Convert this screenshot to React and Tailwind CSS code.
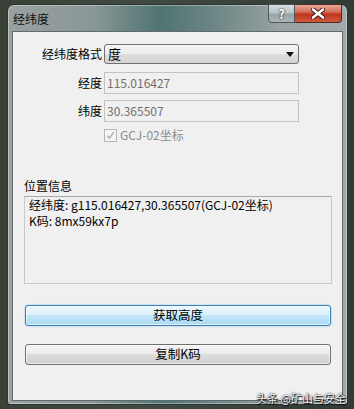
import React from "react";

const font = { fontFamily: '"Noto Sans CJK SC", "Noto Sans", sans-serif' };

const Field = ({ label, children, className = "" }) => (
  <div className={"flex items-center " + className}>
    <div className="w-[91px] pr-[2px] text-right text-[12px] text-black leading-[16px]">
      {label}
    </div>
    {children}
  </div>
);

const DisabledInput = ({ value }) => (
  <div className="flex h-[22px] w-[195px] items-center border border-[#c3c3c3] bg-[#f0f0f0] pl-[2px] text-[12px] text-[#707070]">
    {value}
  </div>
);

const App = () => {
  return (
    <div
      className="relative h-[409px] w-[354px] overflow-hidden bg-[linear-gradient(90deg,#3a4136_0%,#414a40_40%,#323a35_100%)] pl-[7px] pt-[4px]"
      style={font}>
      <div className="flex h-[401px] w-[341px] flex-col rounded-t-[7px] rounded-b-[3px] border border-[#2b3436] bg-[linear-gradient(90deg,#9aa2a0_0%,#8a9796_25%,#4f7472_45%,#6b8584_60%,#98a2a2_80%,#a3aaab_100%)] shadow-[inset_0_0_0_1px_rgba(255,255,255,0.35)]">
        {/* title bar */}
        <div className="flex h-[26px] items-start justify-between pl-[5px] pr-[5px]">
          <span className="mt-[6px] text-[12px] leading-[16px] text-[#111]">
            经纬度
          </span>
          <div className="-mt-[1px] flex">
            <div className="flex h-[19px] w-[27px] items-center justify-center rounded-bl-[4px] border border-[#4b5558] bg-[linear-gradient(180deg,#d9dfe1_0%,#b9c3c6_45%,#98a4a8_55%,#aab6b9_100%)] text-[13px] font-bold leading-none text-white [text-shadow:0_0_2px_#222,0_0_1px_#222]">
              ?
            </div>
            <div className="flex h-[19px] w-[47px] items-center justify-center rounded-br-[4px] border border-l-0 border-[#4b2a24] bg-[linear-gradient(180deg,#e8a898_0%,#d36f5a_40%,#c0341f_55%,#d05a42_100%)]">
              <svg width="14" height="11" viewBox="0 0 14 11">
                <path d="M2 1.5 L12 9.5 M12 1.5 L2 9.5" stroke="#3a1510" strokeWidth="4.4" strokeLinecap="round" />
                <path d="M2 1.5 L12 9.5 M12 1.5 L2 9.5" stroke="#fff" strokeWidth="2.6" strokeLinecap="round" />
              </svg>
            </div>
          </div>
        </div>

        {/* client */}
        <div className="ml-[4px] flex h-[370px] w-[331px] flex-col border border-[#5f6b6e] bg-[#f0f0f0]">
          <Field label="经纬度格式" className="mt-[12px]">
            <div className="flex h-[20px] w-[195px] items-center justify-between rounded-[3px] border border-[#707070] bg-[linear-gradient(180deg,#f4f4f4_0%,#ececec_50%,#dedede_50%,#d4d4d4_100%)] pl-[3px] pr-[4px] text-[13px] text-black">
              <span>度</span>
              <svg width="8" height="5" viewBox="0 0 8 5">
                <path d="M0 0 L8 0 L4 5 Z" fill="#111" />
              </svg>
            </div>
          </Field>
          <Field label="经度" className="mt-[8px]">
            <DisabledInput value="115.016427" />
          </Field>
          <Field label="纬度" className="mt-[6px]">
            <DisabledInput value="30.365507" />
          </Field>

          <div className="ml-[91px] mt-[6px] flex items-center gap-[3px]">
            <div className="flex h-[13px] w-[13px] items-center justify-center border border-[#b4b4b4] bg-[#f5f5f5]">
              <svg width="9" height="9" viewBox="0 0 9 9">
                <path d="M1.5 4.8 L3.6 7.2 L7.8 1" fill="none" stroke="#a8a8a8" strokeWidth="1.3" />
              </svg>
            </div>
            <span className="text-[12px] leading-[14px] text-[#8c8c8c]">GCJ-02坐标</span>
          </div>

          <div className="ml-[11px] mt-[36px] text-[12px] leading-[16px] text-black">位置信息</div>
          <div className="ml-[11px] mt-[2px] h-[88px] w-[308px] border border-[#c9c9c9] border-t-[#a8a8a8] bg-[#f0f0f0] pl-[4px] text-[12px] leading-[16px] text-black">
            <div>经纬度: g115.016427,30.365507(GCJ-02坐标)</div>
            <div>K码: 8mx59kx7p</div>
          </div>

          <button className="ml-[12px] mt-[21px] flex h-[21px] w-[306px] items-center justify-center rounded-[3px] border border-[#3c7fb1] bg-[linear-gradient(180deg,#ecf7fd_0%,#dcf1fc_50%,#c2e6f8_50%,#acdaf3_100%)] text-[12.5px] leading-none text-black shadow-[0_0_2px_#7fc0ea,inset_0_0_0_1px_rgba(255,255,255,0.6)]">
            获取高度
          </button>
          <button className="ml-[12px] mt-[18px] flex h-[21px] w-[306px] items-center justify-center rounded-[3px] border border-[#707070] bg-[linear-gradient(180deg,#f3f3f3_0%,#ebebeb_50%,#dddddd_50%,#cfcfcf_100%)] text-[12.5px] leading-none text-black shadow-[inset_0_0_0_1px_rgba(255,255,255,0.6)]">
            复制K码
          </button>
        </div>
      </div>

      <div className="absolute bottom-[4px] right-[8px] text-[11px] leading-[13px] text-[#f2f2f2] [text-shadow:0_0_2px_#000,1px_1px_1px_#000]">
        头条 @矿山与安全
      </div>
    </div>
  );
};

export default App;
